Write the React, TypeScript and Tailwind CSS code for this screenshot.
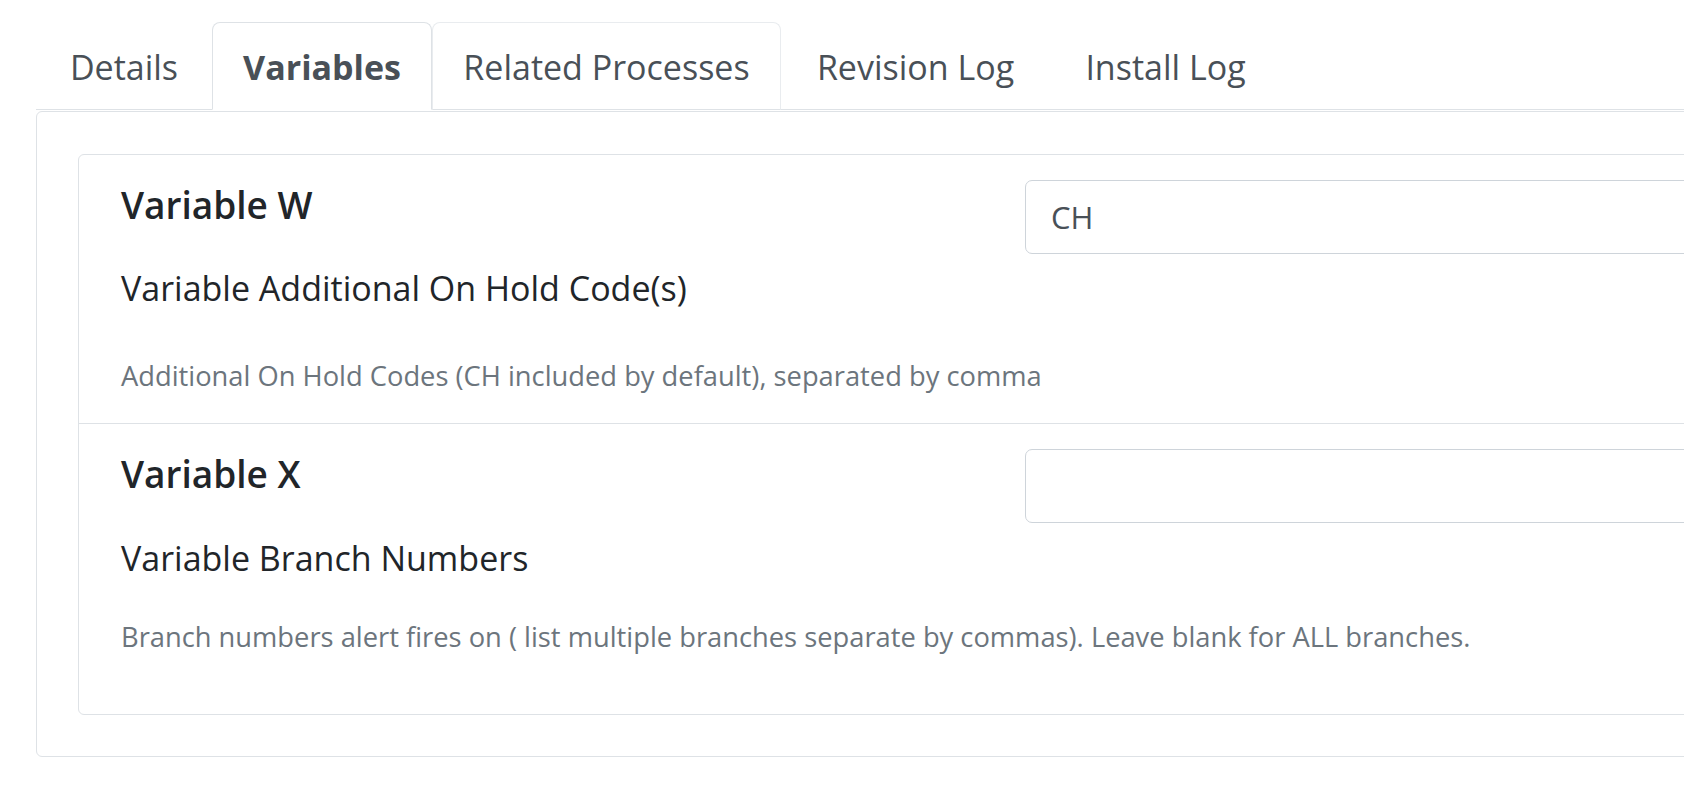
const tabs = [
  { label: "Details", w: "w-[176px]", style: "border-transparent" },
  { label: "Variables", w: "w-[220px]", style: "border-[#dee2e6] border-b-white bg-white font-bold" },
  { label: "Related Processes", w: "w-[349px]", style: "border-[#e9ecef] border-b-transparent" },
  { label: "Revision Log", w: "w-[269px]", style: "border-transparent" },
  { label: "Install Log", w: "w-[231px]", style: "border-transparent" },
];

type Variable = {
  title: string;
  label: string;
  help: string;
  value: string;
  helpGap: string;
  bottom: string;
  labelGap: string;
};

const variables: Variable[] = [
  {
    title: "Variable W",
    label: "Variable Additional On Hold Code(s)",
    help: "Additional On Hold Codes (CH included by default), separated by comma",
    value: "CH",
    labelGap: "mt-[33px]",
    helpGap: "mt-[43px]",
    bottom: "pb-[27px]",
  },
  {
    title: "Variable X",
    label: "Variable Branch Numbers",
    help: "Branch numbers alert fires on ( list multiple branches separate by commas). Leave blank for ALL branches.",
    value: "",
    labelGap: "mt-[34px]",
    helpGap: "mt-[34px]",
    bottom: "pb-[57px]",
  },
];

function VariableRow({ v, first }: { v: Variable; first: boolean }) {
  return (
    <div
      className={`grid grid-cols-[880px_1fr] gap-x-[24px] pl-[42px] pt-[25px] ${v.bottom} ${
        first ? "" : "border-t border-[#dee2e6]"
      }`}
    >
      <div>
        <h5 className="text-[37px] leading-[50px] font-semibold text-[#212529]">{v.title}</h5>
        <p className={`${v.labelGap} text-[34px] leading-[50px] text-[#212529]`}>{v.label}</p>
        <p className={`${v.helpGap} text-[27.3px] leading-[40px] text-[#6c757d] whitespace-nowrap`}>{v.help}</p>
      </div>
      <div>
        <input
          readOnly
          value={v.value}
          className="h-[74px] w-full rounded-[7px] border border-[#ced4da] bg-white px-[25px] text-[31px] text-[#495057] outline-none"
        />
      </div>
    </div>
  );
}

export default function App() {
  return (
    <div
      className="h-[793px] w-[1684px] overflow-hidden bg-white pl-[36px] pt-[22px]"
      style={{ fontFamily: '"Open Sans", "Noto Sans", sans-serif' }}
    >
      <div className="w-[1800px]">
        <ul className="flex border-b border-[#dee2e6]">
          {tabs.map((t) => (
            <li
              key={t.label}
              className={`-mb-px flex h-[88px] items-center justify-center rounded-t-[8px] border pt-[2px] text-[34px] text-[#495057] ${t.w} ${t.style}`}
            >
              {t.label}
            </li>
          ))}
        </ul>
        <div className="mt-px rounded-[6px] border border-[#dee2e6] px-[41px] pt-[42px] pb-[41px]">
          <div className="rounded-[6px] border border-[#dee2e6]">
            {variables.map((v, i) => (
              <VariableRow key={v.title} v={v} first={i === 0} />
            ))}
          </div>
        </div>
      </div>
    </div>
  );
}
